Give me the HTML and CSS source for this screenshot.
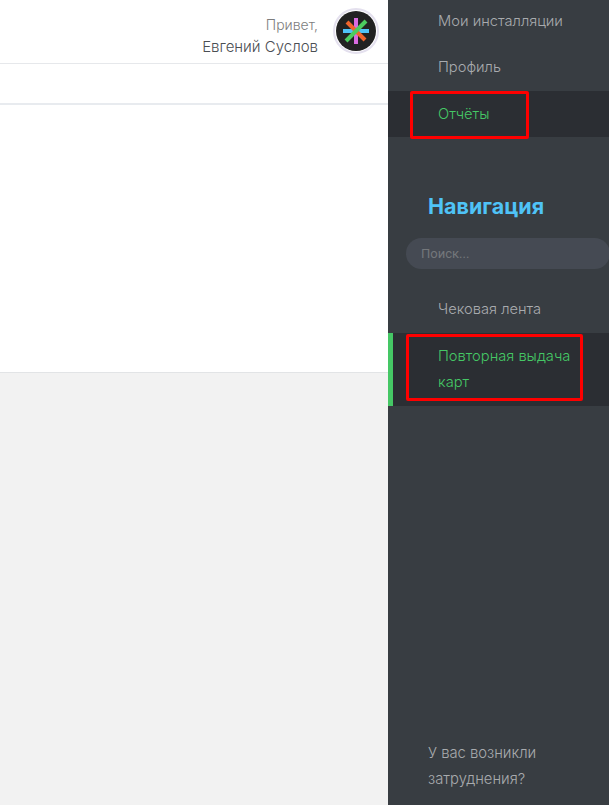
FILE: index.html
```html
<!DOCTYPE html>
<html lang="ru">
<head>
<meta charset="utf-8">
<title>Навигация</title>
<link rel="stylesheet" href="styles.css">
</head>
<body>
<div class="layout">
  <main class="main">
    <header class="topbar">
      <div class="greeting">
        <span class="hello">Привет,</span>
        <span class="username">Евгений Суслов</span>
      </div>
      <div class="avatar">
        <svg viewBox="0 0 40 40" width="40" height="40" aria-hidden="true">
          <circle cx="20" cy="20" r="20" fill="#222222"/>
          <path d="M7 20H33" stroke="#4fc3f7" stroke-width="4"/>
          <path d="M20 7V33" stroke="#d96be0" stroke-width="4"/>
          <path d="M11 11L29 29" stroke="#f0642c" stroke-width="4"/>
          <path d="M30 10L10 30" stroke="#4ccb5f" stroke-width="4"/>
        </svg>
      </div>
    </header>
    <div class="subbar"></div>
    <section class="content"></section>
  </main>
  <aside class="sidebar">
    <ul class="menu menu-top">
      <li class="menu-item">Мои инсталляции</li>
      <li class="menu-item">Профиль</li>
      <li class="menu-item active">Отчёты<span class="mark mark-reports"></span></li>
    </ul>
    <h2 class="nav-title">Навигация</h2>
    <input class="search" type="text" placeholder="Поиск...">
    <ul class="menu menu-nav">
      <li class="menu-item">Чековая лента</li>
      <li class="menu-item active current">Повторная выдача карт<span class="mark mark-cards"></span></li>
    </ul>
    <p class="help">У вас возникли затруднения?</p>
  </aside>
</div>
</body>
</html>
```
FILE: styles.css
```css
* {
  box-sizing: border-box;
}

html,
body {
  margin: 0;
  height: 100%;
  overflow: hidden;
}

body {
  font-family: "Inter", "Noto Sans", sans-serif;
  font-weight: 300;
  background: #f2f2f2;
}

.layout {
  display: flex;
  height: 805px;
}

.main {
  flex: 0 0 388px;
  display: flex;
  flex-direction: column;
}

.topbar {
  height: 64px;
  background: #fff;
  border-bottom: 1px solid #e6e8eb;
  display: flex;
  justify-content: flex-end;
  align-items: flex-start;
  padding: 8px 9px 0 0;
  gap: 15px;
}

.greeting {
  display: flex;
  flex-direction: column;
  align-items: flex-end;
  line-height: 22px;
  padding-top: 6px;
}

.hello {
  font-size: 14px;
  color: #7d7d7d;
}

.username {
  font-size: 15px;
  color: #4a4e53;
}

.avatar {
  width: 46px;
  height: 46px;
  border-radius: 50%;
  border: 2px solid #e4e0ee;
  background: #fff;
  display: flex;
  align-items: center;
  justify-content: center;
}

.subbar {
  height: 41px;
  background: #fff;
  border-bottom: 2px solid #e8ebef;
}

.content {
  height: 268px;
  background: #fff;
  border-bottom: 1px solid #e2e4e6;
}

.sidebar {
  flex: 0 0 221px;
  background: #383d42;
  display: flex;
  flex-direction: column;
  overflow: hidden;
}

.menu {
  list-style: none;
  margin: 0;
  padding: 0;
  display: flex;
  flex-direction: column;
}

.menu-top {
  margin-top: -3px;
}

.menu-item {
  position: relative;
  padding: 11px 30px 8px 50px;
  font-size: 14.700px;
  line-height: 27px;
  color: #a8abae;
}

.active {
  background: #2b2e33;
  color: #45c765;
  padding-top: 10px;
  padding-bottom: 9px;
}

.menu-top .active {
  margin-top: 2px;
}

.current {
  border-left: 5px solid #45c765;
  padding: 10px 30px 11px 45px;
  line-height: 26px;
  margin-top: 2px;
}

.mark {
  position: absolute;
  border: 3px solid #fe0000;
  border-radius: 2px;
  pointer-events: none;
}

.mark-reports {
  left: 22px;
  top: 0;
  width: 119px;
  height: 48px;
}

.mark-cards {
  left: 13px;
  top: 1px;
  width: 177px;
  height: 67px;
}

.nav-title {
  margin: 55px 0 0 40px;
  font-size: 21.500px;
  line-height: 28px;
  font-weight: 700;
  color: #4fc3f7;
}

.search {
  display: block;
  margin: 18px 0 0 18px;
  width: 204px;
  height: 31px;
  flex: none;
  border: 0;
  border-radius: 16px;
  background: #454a53;
  padding: 0 15px;
  font-family: "Roboto", sans-serif;
  font-size: 13px;
  outline: none;
}

.search::placeholder {
  color: #74777b;
  opacity: 1;
}

.menu-nav {
  margin-top: 16px;
}

.help {
  margin: auto 50px 13px 40px;
  font-size: 14.800px;
  line-height: 26px;
  color: #a8abae;
}
```
